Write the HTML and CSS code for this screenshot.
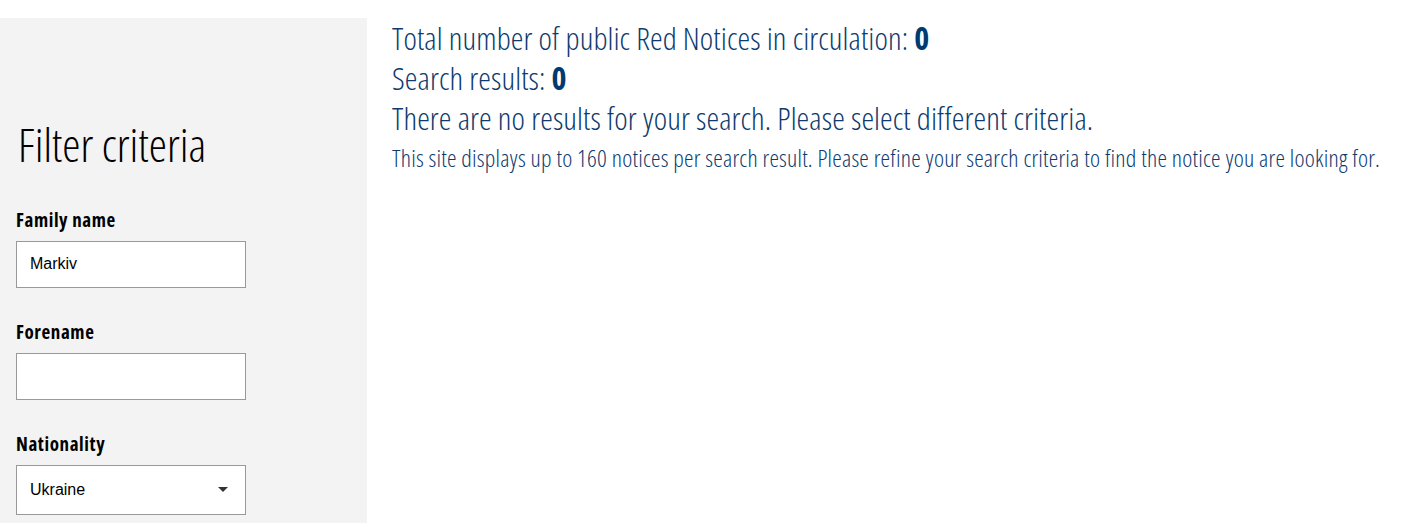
FILE: index.html
```html
<!DOCTYPE html>
<html lang="en">
<head>
    <meta charset="UTF-8">
    <meta name="viewport" content="width=device-width, initial-scale=1.0">
    <title>Red Notices</title>
    <link rel="stylesheet" href="styles.css">
</head>
<body>
    <div class="page">
        <aside class="filters">
            <h2>Filter criteria</h2>
            <div class="field">
                <label for="familyName">Family name</label>
                <input type="text" id="familyName" value="Markiv">
            </div>
            <div class="field">
                <label for="forename">Forename</label>
                <input type="text" id="forename">
            </div>
            <div class="field">
                <label for="nationality">Nationality</label>
                <div class="select-box">
                    <select id="nationality">
                        <option>Ukraine</option>
                    </select>
                    <span class="arrow"></span>
                </div>
            </div>
        </aside>
        <main class="results">
            <p class="total">Total number of public Red Notices in circulation: <strong>0</strong></p>
            <p class="total">Search results: <strong>0</strong></p>
            <p class="total">There are no results for your search. Please select different criteria.</p>
            <p class="note">This site displays up to 160 notices per search result. Please refine your search criteria to find the notice you are looking for.</p>
        </main>
    </div>
</body>
</html>
```

FILE: styles.css
```css
body {
    margin: 0;
    font-family: 'Open Sans', sans-serif;
    font-stretch: 75%;
    background: #fff;
}
.page {
    display: flex;
    padding-top: 18px;
}
.filters {
    width: 367px;
    min-height: 505px;
    background: #f3f3f3;
    padding: 0 16px;
    box-sizing: border-box;
}
.filters h2 {
    font-size: 46px;
    font-weight: 300;
    color: #000;
    margin: 94px 0 32px 2px;
    line-height: 64px;
}
.field {
    margin-bottom: 32px;
}
.field:last-child {
    margin-bottom: 0;
}
label {
    display: block;
    font-weight: 700;
    font-size: 19px;
    letter-spacing: 0.6px;
    line-height: 24px;
    color: #000;
    margin-bottom: 9px;
}
input[type=text], select {
    display: block;
    width: 230px;
    height: 47px;
    border: 1px solid #999;
    background: #fff;
    padding: 0 13px 2px;
    box-sizing: border-box;
    font-family: 'Liberation Sans', Arial, sans-serif;
    font-stretch: 100%;
    font-size: 16px;
    color: #000;
    border-radius: 0;
    appearance: none;
    margin: 0;
}
.select-box {
    position: relative;
    width: 230px;
}
.select-box select {
    height: 50px;
}
.arrow {
    position: absolute;
    right: 18px;
    top: 22px;
    border-left: 5px solid transparent;
    border-right: 5px solid transparent;
    border-top: 5px solid #333;
}
.results {
    padding-left: 25px;
    color: #0d3b6e;
}
.results p {
    margin: 0;
    font-weight: 300;
    letter-spacing: 0.1px;
}
.total {
    font-size: 32px;
    line-height: 40px;
}
.total strong {
    font-weight: 700;
    color: #003a70;
}
.results .note {
    font-size: 24px;
    letter-spacing: 0.22px;
    line-height: 40px;
}
```
